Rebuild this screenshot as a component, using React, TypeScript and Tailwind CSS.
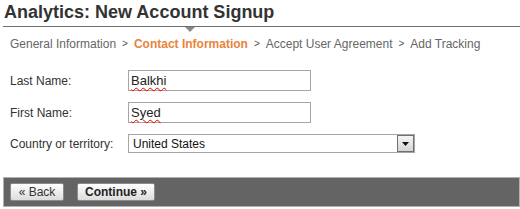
import React from 'react';

const steps = ['General Information', 'Contact Information', 'Accept User Agreement', 'Add Tracking'];

function Field({ label, value }: { label: string; value: string }) {
  return (
    <div className="flex items-center h-[21px]">
      <div className="w-[125px] shrink-0 pl-[7px] text-[12px] text-[#333]">{label}</div>
      <div className="w-[183px] h-[21px] border border-[#a5a5a5] bg-white pl-[2px] flex items-center text-[13px] text-[#222]">
        <span className="underline decoration-wavy decoration-[#e00] decoration-[1px] underline-offset-[2px]">{value}</span>
      </div>
    </div>
  );
}

export default function App() {
  return (
    <div className="w-[520px] h-[209px] bg-white pl-[3px] overflow-hidden" style={{ fontFamily: '"Liberation Sans", Arial, sans-serif' }}>
      <div className="relative">
        <div className="border-b border-[#6e6e6e] pt-[1px] pb-[3px]">
          <h1 className="pl-[1px] text-[18px] leading-[22px] font-bold text-[#333]">Analytics: New Account Signup</h1>
        </div>
        <div className="absolute left-[182px] top-[27px] w-0 h-0 border-l-[5px] border-r-[5px] border-t-[5px] border-l-transparent border-r-transparent border-t-[#8a8a8a]" />
      </div>

      <div className="mt-[9px] pl-[7px] flex items-center whitespace-nowrap text-[12px] leading-[16px] text-[#666]">
        {steps.map((s, i) => (
          <React.Fragment key={s}>
            {i > 0 && <span className="mx-[6px] text-[10px] text-[#555]">&gt;</span>}
            <span className={i === 1 ? 'font-bold text-[#e8843c]' : ''}>{s}</span>
          </React.Fragment>
        ))}
      </div>

      <div className="mt-[18px] flex flex-col gap-[11px]">
        <Field label="Last Name:" value="Balkhi" />
        <Field label="First Name:" value="Syed" />
        <div className="flex items-start h-[21px]">
          <div className="w-[125px] shrink-0 pl-[7px] text-[12px] text-[#333] h-[19px] flex items-center">Country or territory:</div>
          <div className="w-[287px] h-[19px] border border-[#a5a5a5] bg-white flex items-center">
            <span className="flex-1 pl-[4px] text-[12px] text-[#111]">United States</span>
            <div className="w-[17px] h-[17px] border border-[#707070] bg-gradient-to-b from-[#f4f4f4] to-[#d6d6d6] flex items-center justify-center">
              <svg width="7" height="4" viewBox="0 0 7 4">
                <path d="M0 0h7L3.5 4z" fill="#111" />
              </svg>
            </div>
          </div>
        </div>
      </div>

      <div className="mt-[22px] h-[30px] border border-[#b0b0b0] bg-[#646464] pl-[6px] pt-[5px] flex items-start gap-[13px]">
        <button className="h-[18px] w-[54px] p-0 whitespace-nowrap border border-[#8c8c8c] rounded-[2px] bg-gradient-to-b from-white to-[#dcdcdc] text-[12px] leading-[16px] text-[#333]">
          « Back
        </button>
        <button className="h-[18px] w-[78px] p-0 whitespace-nowrap border border-[#8c8c8c] rounded-[2px] bg-gradient-to-b from-white to-[#dcdcdc] text-[12px] leading-[16px] font-bold text-[#222]">
          Continue »
        </button>
      </div>
    </div>
  );
}
